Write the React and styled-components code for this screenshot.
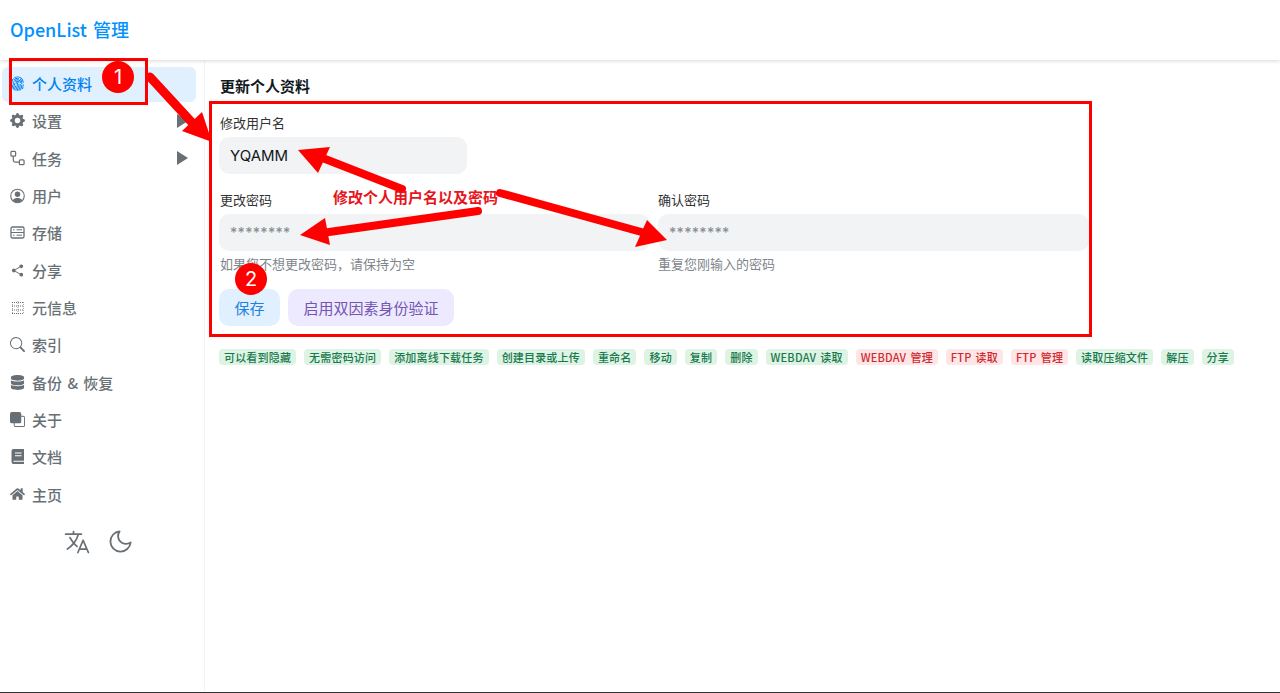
import styled, { createGlobalStyle } from "styled-components";
import {
  BsFingerprint,
  BsGearFill,
  BsSearch,
  BsFront,
} from "react-icons/bs";
import { FaDatabase, FaHome } from "react-icons/fa";
import { IoLanguageOutline, IoShareSocial } from "react-icons/io5";
import { FiMoon } from "react-icons/fi";

const GlobalStyle = createGlobalStyle`
  html, body {
    margin: 0;
    padding: 0;
    background: #fff;
    overflow: hidden;
  }

  * {
    box-sizing: border-box;
  }

  body {
    font-family: "Noto Sans CJK SC", "Noto Sans", sans-serif;
  }
`;

const Page = styled.div`
  position: relative;
  width: 1280px;
  height: 693px;
  display: flex;
  flex-direction: column;
  border-bottom: 1px solid #333;
  overflow: hidden;
`;

const Header = styled.header`
  height: 60px;
  flex: none;
  display: flex;
  align-items: center;
  padding: 0 0 2px 10px;
  box-shadow: 0 1px 4px rgba(0, 0, 0, 0.16);
  position: relative;
  z-index: 1;
`;

const Brand = styled.h1`
  margin: 0;
  font-size: 18px;
  font-weight: 500;
  word-spacing: 2px;
  color: #0091ff;
`;

const Body = styled.div`
  flex: 1;
  display: flex;
  min-height: 0;
`;

const Sidebar = styled.nav`
  width: 205px;
  flex: none;
  padding: 7px 8px 0 2px;
  border-right: 1px solid #f1f3f5;
`;

const MenuItem = styled.div`
  height: 35px;
  margin-bottom: 2.35px;
  display: flex;
  align-items: center;
  padding: 0 8px 2px;
  border-radius: 6px;
  font-size: 15px;
  font-weight: 500;
  word-spacing: 2px;
  color: ${(p) => (p.$active ? "#0081f1" : "#687076")};
  background: ${(p) => (p.$active ? "#e1f0ff" : "transparent")};
`;

const IconSlot = styled.span`
  width: 15px;
  height: 16px;
  margin-right: 7px;
  display: flex;
  align-items: center;
  justify-content: center;
  flex: none;
`;

const MenuLabel = styled.span`
  flex: 1;
`;

const Caret = styled.span`
  width: 0;
  height: 0;
  border-left: 11px solid #687076;
  border-top: 7px solid transparent;
  border-bottom: 7px solid transparent;
`;

const ToolRow = styled.div`
  display: flex;
  justify-content: center;
  align-items: center;
  gap: 16px;
  margin-top: 15px;
  padding-right: 2px;
  color: #687076;
`;

const Main = styled.main`
  flex: 1;
  padding: 16px 14px 0;
`;

const Title = styled.h2`
  margin: 0 0 18px;
  padding-left: 1px;
  font-size: 15px;
  line-height: 20px;
  font-weight: 700;
  color: #11181c;
`;

const Field = styled.div`
  display: flex;
  flex-direction: column;
`;

const UsernameField = styled(Field)`
  width: 248px;
  margin-bottom: 17px;
`;

const Label = styled.label`
  padding-left: ${(p) => (p.$flush ? 0 : 1)}px;
  margin-bottom: 5px;
  font-size: 13px;
  line-height: 18px;
  color: #333;
`;

const Input = styled.input`
  height: 37px;
  width: 100%;
  padding: 0 11px;
  border: none;
  border-radius: 10px;
  outline: none;
  background: #f1f3f5;
  font-family: "Inter", "Noto Sans", sans-serif;
  font-size: 15px;
  color: #11181c;

  &::placeholder {
    color: #889096;
    font-size: 14px;
    font-weight: 500;
    letter-spacing: 0.3px;
  }
`;

const PasswordGrid = styled.div`
  width: 870px;
  display: grid;
  grid-template-columns: 431px 431px;
  column-gap: 8px;
`;

const Help = styled.p`
  margin: 4px 0 0;
  padding-left: ${(p) => (p.$flush ? 0 : 1)}px;
  font-size: 13px;
  line-height: 18px;
  color: #7e868c;
`;

const Actions = styled.div`
  display: flex;
  gap: 8px;
  margin-top: 16px;
`;

const Button = styled.button`
  height: 37px;
  padding: 0 15.5px 1px;
  border: none;
  border-radius: 10px;
  font-family: inherit;
  font-size: 15px;
  color: ${(p) => (p.$purple ? "#7456b0" : "#2080e0")};
  background: ${(p) => (p.$purple ? "#ede9fe" : "#e1f0ff")};
`;

const TagList = styled.div`
  display: flex;
  gap: 8px;
  margin-top: 23px;
`;

const Tag = styled.span`
  height: 16px;
  padding: 0 5px;
  display: flex;
  align-items: center;
  border-radius: 4px;
  font-size: 11px;
  font-weight: 500;
  letter-spacing: 0.18px;
  word-spacing: 1.5px;
  white-space: nowrap;
  color: ${(p) => (p.$denied ? "#cd2b31" : "#18794e")};
  background: ${(p) => (p.$denied ? "#ffe5e5" : "#ddf3e4")};
`;

/* annotations drawn over the screenshot */
const Frame = styled.div`
  position: absolute;
  left: ${(p) => p.$x}px;
  top: ${(p) => p.$y}px;
  width: ${(p) => p.$w}px;
  height: ${(p) => p.$h}px;
  border: 3px solid #ff0000;
  pointer-events: none;
`;

const Marker = styled.div`
  position: absolute;
  left: ${(p) => p.$x}px;
  top: ${(p) => p.$y}px;
  width: 32px;
  height: 32px;
  border-radius: 50%;
  display: flex;
  align-items: center;
  justify-content: center;
  background: #ff0000;
  color: #fff;
  font-family: "Inter", sans-serif;
  font-size: 20px;
`;

const Note = styled.div`
  position: absolute;
  left: 333px;
  top: 187px;
  font-size: 15px;
  line-height: 20px;
  font-weight: 700;
  color: #e8141c;
  white-space: nowrap;
`;

const ArrowLayer = styled.svg`
  position: absolute;
  left: 0;
  top: 0;
  pointer-events: none;
`;

function TaskIcon() {
  return (
    <svg width="16" height="16" viewBox="0 0 16 16" fill="none" stroke="currentColor" strokeWidth="1.3">
      <rect x="1" y="1" width="5" height="5" rx="1" />
      <rect x="10" y="10" width="5" height="5" rx="1" />
      <path d="M3.5 6v4.5a2 2 0 0 0 2 2H10" />
    </svg>
  );
}

function UserIcon() {
  return (
    <svg width="16" height="16" viewBox="0 0 16 16">
      <circle cx="8" cy="8" r="7.2" fill="none" stroke="currentColor" strokeWidth="1.2" />
      <circle cx="8" cy="6.2" r="2.9" fill="currentColor" />
      <path d="M2.9 12.6C4 10.6 6 10 8 10s4 .6 5.1 2.6A7 7 0 0 1 8 15a7 7 0 0 1-5.1-2.4z" fill="currentColor" />
    </svg>
  );
}

function StorageIcon() {
  return (
    <svg width="15" height="13" viewBox="0 0 15 13" fill="none" stroke="currentColor">
      <rect x="1" y="1" width="13" height="11" rx="1.5" strokeWidth="1.3" />
      <path d="M1 6.5h13" strokeWidth="1" />
      <path d="M3 3.8h1.5M3 9.2h1.5M6.5 3.8h5.5M6.5 9.2h5.5" strokeWidth="1" />
    </svg>
  );
}

function MetaIcon() {
  return (
    <svg width="14" height="14" viewBox="0 0 14 14" fill="none" stroke="currentColor" strokeWidth="1" strokeDasharray="1 1">
      <path d="M1 1.5h12M1 5h12M1 9h12M1 12.5h12" />
      <path d="M1.5 1v12M7 0v14M12.5 1v12" opacity="0.6" />
    </svg>
  );
}

function DocsIcon() {
  return (
    <svg width="14" height="15" viewBox="0 0 14 15">
      <path d="M2.5 0H13v15H2.5A2 2 0 0 1 .5 13V2a2 2 0 0 1 2-2z" fill="currentColor" />
      <path d="M4 4h6.5M4 6.8h6.5M2.5 12.2H13" stroke="#fff" strokeWidth="1.1" />
    </svg>
  );
}

const menu = [
  { label: "个人资料", icon: <BsFingerprint size={15} />, active: true },
  { label: "设置", icon: <BsGearFill size={15} />, caret: true },
  { label: "任务", icon: <TaskIcon />, caret: true },
  { label: "用户", icon: <UserIcon /> },
  { label: "存储", icon: <StorageIcon /> },
  { label: "分享", icon: <IoShareSocial size={15} /> },
  { label: "元信息", icon: <MetaIcon /> },
  { label: "索引", icon: <BsSearch size={15} /> },
  { label: "备份 & 恢复", icon: <FaDatabase size={15} /> },
  { label: "关于", icon: <BsFront size={15} /> },
  { label: "文档", icon: <DocsIcon /> },
  { label: "主页", icon: <FaHome size={16} /> },
];

const tags = [
  ["可以看到隐藏"],
  ["无需密码访问"],
  ["添加离线下载任务"],
  ["创建目录或上传"],
  ["重命名"],
  ["移动"],
  ["复制"],
  ["删除"],
  ["WEBDAV 读取"],
  ["WEBDAV 管理", true],
  ["FTP 读取", true],
  ["FTP 管理", true],
  ["读取压缩文件"],
  ["解压"],
  ["分享"],
];

const arrows = [
  { shaft: "150,77 197,128", head: "202,112 182,131 212,142", width: 9 },
  { shaft: "402,189 320,157", head: "298,150 330,147 318,173", width: 8 },
  { shaft: "478,211 322,233", head: "300,235 325,218 330,245", width: 8 },
  { shaft: "500,193 645,233", head: "667,240 647,220 635,247", width: 8 },
];

function App() {
  return (
    <Page>
      <GlobalStyle />
      <Header>
        <Brand>OpenList 管理</Brand>
      </Header>
      <Body>
        <Sidebar>
          {menu.map((item) => (
            <MenuItem key={item.label} $active={item.active}>
              <IconSlot>{item.icon}</IconSlot>
              <MenuLabel>{item.label}</MenuLabel>
              {item.caret && <Caret />}
            </MenuItem>
          ))}
          <ToolRow>
            <IoLanguageOutline size={28} />
            <FiMoon size={27} strokeWidth={1.6} />
          </ToolRow>
        </Sidebar>
        <Main>
          <Title>更新个人资料</Title>
          <UsernameField>
            <Label>修改用户名</Label>
            <Input defaultValue="YQAMM" />
          </UsernameField>
          <PasswordGrid>
            <Field>
              <Label>更改密码</Label>
              <Input placeholder="********" />
              <Help>如果您不想更改密码，请保持为空</Help>
            </Field>
            <Field>
              <Label $flush>确认密码</Label>
              <Input placeholder="********" />
              <Help $flush>重复您刚输入的密码</Help>
            </Field>
          </PasswordGrid>
          <Actions>
            <Button>保存</Button>
            <Button $purple>启用双因素身份验证</Button>
          </Actions>
          <TagList>
            {tags.map(([text, denied]) => (
              <Tag key={text} $denied={denied}>
                {text}
              </Tag>
            ))}
          </TagList>
        </Main>
      </Body>

      <Frame $x={9} $y={58} $w={139} $h={47} />
      <Frame $x={209} $y={101} $w={883} $h={236} />
      <Marker $x={102} $y={61}>1</Marker>
      <Marker $x={235} $y={263}>2</Marker>
      <ArrowLayer width="1280" height="693">
        {arrows.map((a) => (
          <g key={a.head} fill="#ff0000" stroke="#ff0000">
            <polyline points={a.shaft} strokeWidth={a.width} strokeLinecap="round" fill="none" />
            <polygon points={a.head} strokeWidth="0" />
          </g>
        ))}
      </ArrowLayer>
      <Note>修改个人用户名以及密码</Note>
    </Page>
  );
}

export default App;
